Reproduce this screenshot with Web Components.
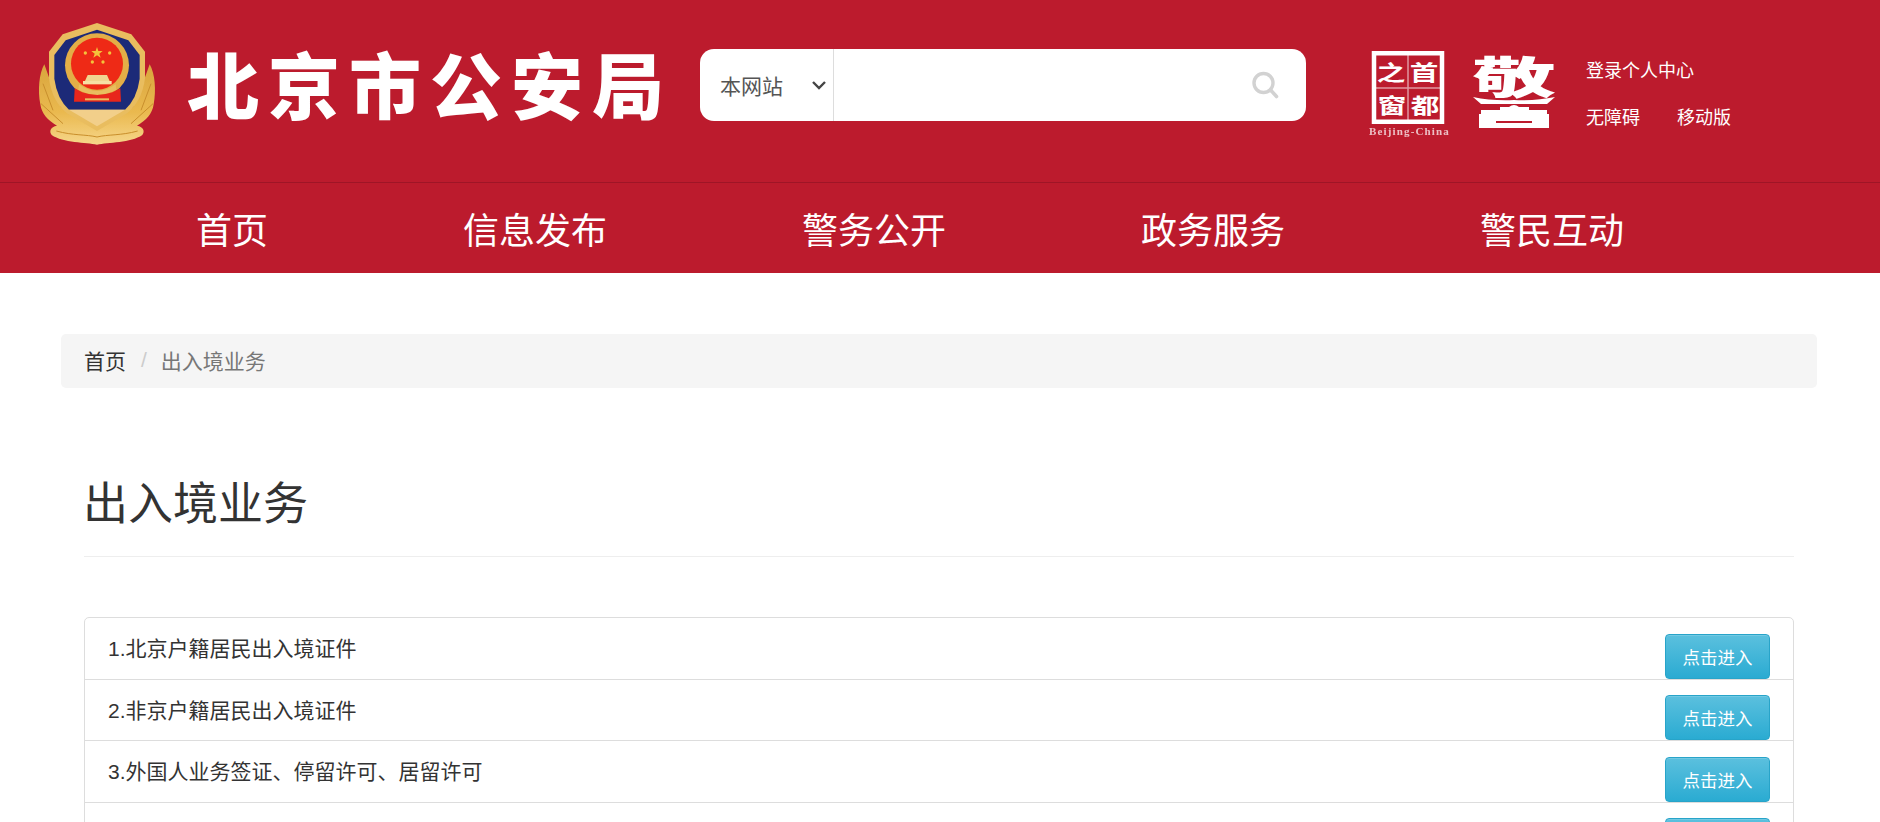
<!DOCTYPE html>
<html lang="zh-CN">
<head>
<meta charset="utf-8">
<title>出入境业务</title>
<style>
    html, body {
        margin: 0;
        height: 100%;
        overflow: hidden;
        background: #fff;
    }
    body {
        font-family: "Liberation Sans", "Noto Sans CJK SC", sans-serif;
        color: #333;
    }
</style>
</head>
<body>
<site-header></site-header>
<site-nav>
    <a>首页</a>
    <a>信息发布</a>
    <a>警务公开</a>
    <a>政务服务</a>
    <a>警民互动</a>
</site-nav>
<page-main>
    <bread-crumb current="出入境业务">首页</bread-crumb>
    <page-title>出入境业务</page-title>
    <entry-list>
        <entry-item action="点击进入">1.北京户籍居民出入境证件</entry-item>
        <entry-item action="点击进入">2.非京户籍居民出入境证件</entry-item>
        <entry-item action="点击进入">3.外国人业务签证、停留许可、居留许可</entry-item>
        <!-- only the top of this row is on screen -->
        <entry-item></entry-item>
    </entry-list>
</page-main>

<script>
class PoliceEmblem extends HTMLElement {
    constructor() {
        super();
        this.attachShadow({ mode: 'open' });
        this.shadowRoot.innerHTML = `
            <style>
                :host { display: block; width: 116px; height: 122px; flex: none; }
                svg { display: block; }
            </style>
            <svg width="116" height="122" viewBox="58 38 348 366">
                <defs>
                    <linearGradient id="gold" x1="0" y1="0" x2="0" y2="1">
                        <stop offset="0" stop-color="#d9a53d"/>
                        <stop offset=".6" stop-color="#eab94f"/>
                        <stop offset="1" stop-color="#f6d68a"/>
                    </linearGradient>
                    <filter id="soft"><feGaussianBlur stdDeviation="1.6"/></filter>
                </defs>
                <g filter="url(#soft)">
                    <!-- wheat -->
                    <path fill="url(#gold)" d="M74 162 C58 190 54 240 62 282 C66 310 84 330 112 346 C92 350 88 362 96 374 C130 398 200 396 232 403 C264 396 334 398 368 374 C376 362 372 350 352 346 C380 330 398 310 402 282 C410 240 406 190 390 162 C376 200 360 250 340 290 L232 350 L124 290 C104 250 88 200 74 162Z"/>
                    <path fill="none" stroke="#c98f2c" stroke-width="3" d="M70 220 L100 300 M64 280 L130 340 M110 362 C160 376 200 372 232 380 C264 372 304 376 354 362 M394 220 L364 300 M400 280 L334 340"/>
                    <!-- shield -->
                    <path fill="#e9bd5f" d="M232 38 L335 72 L376 124 L376 205 Q366 275 320 310 L232 362 L144 310 Q98 275 88 205 L88 124 L129 72Z"/>
                    <path fill="#1b2a78" d="M232 58 L326 90 L360 134 L360 205 Q352 265 316 298 H148 Q112 265 104 205 L104 134 L138 90Z"/>
                    <path fill="#f2cf8a" d="M148 298 H316 L232 348Z"/>
                    <!-- national emblem -->
                    <circle cx="232" cy="165" r="96" fill="#e3ae46"/>
                    <circle cx="232" cy="160" r="78" fill="#ee2a17"/>
                    <path fill="#f4c23a" d="M232 110 l4 12 h13 l-10 8 l4 12 l-11 -7 l-11 7 l4 -12 l-10 -8 h13Z"/>
                    <circle cx="197" cy="128" r="5" fill="#f4c23a"/>
                    <circle cx="270" cy="128" r="5" fill="#f4c23a"/>
                    <circle cx="218" cy="155" r="5" fill="#f4c23a"/>
                    <circle cx="250" cy="155" r="5" fill="#f4c23a"/>
                    <path fill="#f0d590" d="M204 194 H262 L270 212 H196Z"/>
                    <rect x="190" y="212" width="86" height="10" fill="#f6e0a4"/>
                    <path fill="#e9bd5f" d="M178 222 Q232 262 288 222 L290 238 Q232 268 176 238Z"/>
                    <path fill="#e8261a" d="M165 234 L188 246 Q232 262 278 246 L302 234 L304 274 H163Z"/>
                    <rect x="196" y="264" width="72" height="6" fill="#e9bd5f"/>
                </g>
            </svg>`;
    }
}
customElements.define('police-emblem', PoliceEmblem);

class SearchBox extends HTMLElement {
    constructor() {
        super();
        this.attachShadow({ mode: 'open' });
        this.shadowRoot.innerHTML = `
            <style>
                :host {
                    display: flex;
                    flex: none;
                    width: 606px;
                    height: 72px;
                    background: #fff;
                    border-radius: 14px;
                    overflow: hidden;
                    color: #555;
                    font-size: 21px;
                }
                .scope {
                    display: flex;
                    align-items: center;
                    justify-content: space-between;
                    box-sizing: border-box;
                    width: 134px;
                    padding: 0 6px 0 20px;
                    border-right: 1px solid #ddd;
                }
                input {
                    flex: 1;
                    min-width: 0;
                    border: 0;
                    outline: 0;
                    background: none;
                }
                .go {
                    display: flex;
                    align-items: center;
                    padding: 0 27px 0 0;
                }
                svg { display: block; }
            </style>
            <div class="scope">
                <span>本网站</span>
                <svg width="16" height="10" viewBox="0 0 16 10"><path d="M2 2 L8 8 L14 2" fill="none" stroke="#444" stroke-width="2.4"/></svg>
            </div>
            <input type="text" aria-label="搜索">
            <div class="go">
                <svg width="28" height="28" viewBox="0 0 28 28"><circle cx="12.5" cy="12" r="9.5" fill="none" stroke="#d2d2d2" stroke-width="3.4"/><path d="M19.5 19 L25.5 25.5" stroke="#d2d2d2" stroke-width="3.6" stroke-linecap="round"/></svg>
            </div>`;
    }
}
customElements.define('search-box', SearchBox);

class CapitalSeal extends HTMLElement {
    constructor() {
        super();
        this.attachShadow({ mode: 'open' });
        this.shadowRoot.innerHTML = `
            <style>
                :host { display: block; width: 84px; height: 86px; flex: none; }
                svg { display: block; }
                text { font-family: "Noto Sans CJK SC", sans-serif; font-weight: 700; fill: #fff; text-anchor: middle; }
                .cn { font-size: 22px; }
                .en { font-family: "Liberation Serif", serif; font-size: 11px; letter-spacing: 1.15px; opacity: .72; text-anchor: start; }
            </style>
            <svg width="84" height="86" viewBox="0 0 84 86">
                <rect x="7" y="2.25" width="68" height="68.5" fill="none" stroke="#fff" stroke-width="4.5"/>
                <path d="M41 3 V70 M8 37 H74" stroke="#fff" stroke-opacity=".55" stroke-width="1.5"/>
                <text class="cn" transform="translate(24 21) scale(1.3 .95)" y="8">之</text>
                <text class="cn" transform="translate(57 21) scale(1.3 .95)" y="8">首</text>
                <text class="cn" transform="translate(25 54) scale(1.3 .95)" y="8">窗</text>
                <text class="cn" transform="translate(58 54) scale(1.3 .95)" y="8">都</text>
                <text class="en" x="2" y="84">Beijing-China</text>
            </svg>`;
    }
}
customElements.define('capital-seal', CapitalSeal);

class PoliceMark extends HTMLElement {
    constructor() {
        super();
        this.attachShadow({ mode: 'open' });
        this.shadowRoot.innerHTML = `
            <style>
                :host { display: block; width: 84px; height: 71px; flex: none; }
                svg { display: block; overflow: visible; }
                text { font-family: "Noto Sans CJK SC", sans-serif; font-weight: 900; fill: #fff; }
            </style>
            <svg width="84" height="71" viewBox="0 0 84 71">
                <text transform="translate(0 37) scale(1.75 .92)" font-size="48">敬</text>
                <g fill="#fff">
                    <path d="M1 40 Q20 44 42 43 Q64 44 83 40 L75 47 H9Z"/>
                    <path d="M28 56 V50 H37 Q42 46 47 50 H57 V56Z"/>
                    <rect x="9" y="53" width="66" height="4"/>
                    <path fill-rule="evenodd" d="M7 57 H77 V71 H7Z M24 64 V66 H60 V64Z"/>
                </g>
            </svg>`;
    }
}
customElements.define('police-mark', PoliceMark);

class SiteHeader extends HTMLElement {
    constructor() {
        super();
        this.attachShadow({ mode: 'open' });
        this.shadowRoot.innerHTML = `
            <style>
                :host {
                    display: flex;
                    align-items: center;
                    box-sizing: border-box;
                    height: 183px;
                    padding: 0 0 13px 39px;
                    background: #bc1b2d;
                    border-bottom: 1px solid #9f1526;
                    color: #fff;
                }
                police-emblem { margin-top: -1px; margin-right: 33px; }
                .name {
                    flex: none;
                    width: 481px;
                    margin: -6px 32px 0 -1px;
                    font-family: "Noto Sans CJK SC", sans-serif;
                    font-size: 72px;
                    font-weight: 900;
                    letter-spacing: 9px;
                    line-height: 80px;
                    white-space: nowrap;
                }
                capital-seal { margin: 19px 0 0 61px; }
                police-mark { margin: 16px 0 0 21px; }
                .links {
                    display: flex;
                    flex-direction: column;
                    gap: 20px;
                    margin: 20px 0 0 30px;
                    font-size: 18px;
                    line-height: 27px;
                }
                .row { display: flex; gap: 37px; }
            </style>
            <police-emblem></police-emblem>
            <div class="name">北京市公安局</div>
            <search-box></search-box>
            <capital-seal></capital-seal>
            <police-mark></police-mark>
            <div class="links">
                <div>登录个人中心</div>
                <div class="row"><span>无障碍</span><span>移动版</span></div>
            </div>`;
    }
}
customElements.define('site-header', SiteHeader);

class SiteNav extends HTMLElement {
    constructor() {
        super();
        this.attachShadow({ mode: 'open' });
        this.shadowRoot.innerHTML = `
            <style>
                :host {
                    display: flex;
                    align-items: center;
                    gap: 195px;
                    height: 90px;
                    padding-left: 196px;
                    background: #bc1b2d;
                    color: #fff;
                    font-size: 36px;
                }
            </style>
            <slot></slot>`;
    }
}
customElements.define('site-nav', SiteNav);

class PageMain extends HTMLElement {
    constructor() {
        super();
        this.attachShadow({ mode: 'open' });
        this.shadowRoot.innerHTML = `
            <style>
                :host {
                    display: block;
                    padding: 61px 63px 0 61px;
                }
            </style>
            <slot></slot>`;
    }
}
customElements.define('page-main', PageMain);

class BreadCrumb extends HTMLElement {
    constructor() {
        super();
        this.attachShadow({ mode: 'open' });
        this.shadowRoot.innerHTML = `
            <style>
                :host {
                    display: flex;
                    align-items: center;
                    box-sizing: border-box;
                    height: 54px;
                    padding: 0 0 2px 23px;
                    background: #f5f5f5;
                    border-radius: 5px;
                    color: #333;
                    font-size: 21px;
                }
                .sep { margin: 0 14px 0 15px; color: #ccc; }
                .current { color: #777; }
            </style>
            <slot></slot><span class="sep">/</span><span class="current"></span>`;
    }

    connectedCallback() {
        this.shadowRoot.querySelector('.current').textContent = this.getAttribute('current');
    }
}
customElements.define('bread-crumb', BreadCrumb);

class PageTitle extends HTMLElement {
    constructor() {
        super();
        this.attachShadow({ mode: 'open' });
        this.shadowRoot.innerHTML = `
            <style>
                :host {
                    display: block;
                    margin: 90px 23px 60px 23px;
                    padding-bottom: 24px;
                    border-bottom: 1px solid #eee;
                    color: #333;
                    font-size: 45px;
                    font-weight: 400;
                    line-height: 54px;
                    text-indent: -1px;
                }
            </style>
            <slot></slot>`;
    }
}
customElements.define('page-title', PageTitle);

class EntryList extends HTMLElement {
    constructor() {
        super();
        this.attachShadow({ mode: 'open' });
        this.shadowRoot.innerHTML = `
            <style>
                :host {
                    display: block;
                    margin: 0 23px;
                    border: 1px solid #ddd;
                    border-radius: 5px;
                }
            </style>
            <slot></slot>`;
    }
}
customElements.define('entry-list', EntryList);

class EntryItem extends HTMLElement {
    constructor() {
        super();
        this.attachShadow({ mode: 'open' });
        this.shadowRoot.innerHTML = `
            <style>
                :host {
                    display: flex;
                    justify-content: space-between;
                    align-items: flex-end;
                    box-sizing: border-box;
                    height: 61.5px;
                    padding: 0 23px;
                    border-bottom: 1px solid #ddd;
                    color: #333;
                    font-size: 21px;
                }
                .label { align-self: center; padding-bottom: 2px; }
                .go {
                    display: flex;
                    align-items: center;
                    justify-content: center;
                    box-sizing: border-box;
                    width: 105px;
                    height: 45px;
                    border: 1px solid #28a4c9;
                    border-radius: 4px;
                    background: linear-gradient(#5bc0de, #2aabd2);
                    box-shadow: inset 0 1px 0 rgba(255, 255, 255, .15);
                    color: #fff;
                    font-size: 17.5px;
                }
            </style>
            <span class="label"><slot></slot></span>
            <a class="go"></a>`;
    }

    connectedCallback() {
        this.shadowRoot.querySelector('.go').textContent = this.getAttribute('action') || '';
    }
}
customElements.define('entry-item', EntryItem);
</script>
</body>
</html>
